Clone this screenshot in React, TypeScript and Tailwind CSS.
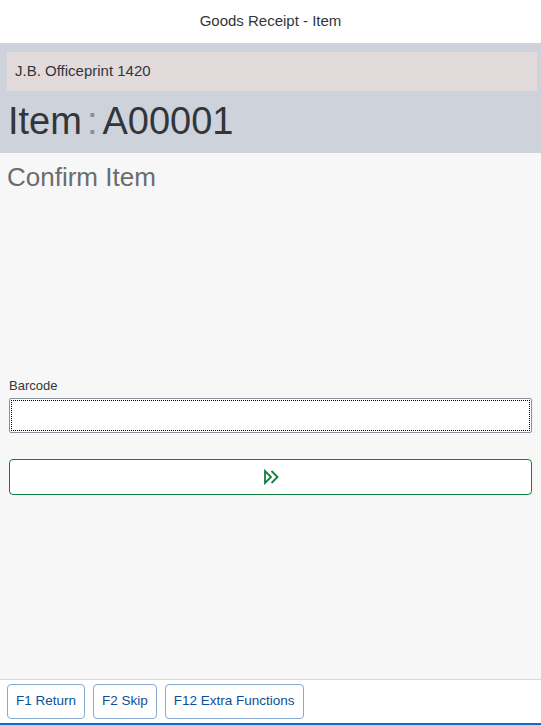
import React from "react";

const ForwardIcon = () => (
  <svg width="16" height="16" viewBox="0 0 16 16" fill="none" stroke="#107e3e" strokeWidth="1.8" strokeLinejoin="miter">
    <path d="M2 2 L2 14 L8 8 Z" />
    <path d="M8.5 2 L14.5 8 L8.5 14" />
  </svg>
);

export default function App() {
  return (
    <div
      className="flex h-[725px] w-full flex-col bg-[#f7f7f7] text-[#32363a]"
      style={{ fontFamily: '"Liberation Sans", Arial, sans-serif' }}
    >
      {/* title bar */}
      <div className="flex h-[43px] items-center justify-center bg-white text-[15px]">
        Goods Receipt - Item
      </div>

      {/* object header */}
      <div className="flex h-[110px] flex-col bg-[#ced3db] pl-[7px] pr-[4px] pt-[9px]">
        <div className="flex h-[39px] items-center bg-[#e2dadb] pl-[8px] text-[15px]">
          J.B. Officeprint 1420
        </div>
        <div className="mt-[7px] flex items-baseline pl-[1px] text-[38px] leading-[46px]">
          <span>Item</span>
          <span className="mx-[5px] text-[#8a8d90]">:</span>
          <span>A00001</span>
        </div>
      </div>

      {/* content */}
      <div className="flex flex-1 flex-col px-[9px]">
        <div className="mt-[8px] -ml-[2px] text-[26px] leading-[32px] text-[#6a6d70]">Confirm Item</div>

        <div className="mt-[185px] text-[13px] leading-[16px]">Barcode</div>
        <div className="mt-[4px] h-[35px] w-full rounded-[2px] border border-[#89919a] bg-white p-[1px]">
          <div className="h-full w-full border border-dotted border-black" />
        </div>

        <button className="mt-[26px] flex h-[36px] w-full items-center justify-center rounded-[4px] border border-[#107e3e] bg-white">
          <ForwardIcon />
        </button>
      </div>

      {/* footer */}
      <div className="flex gap-[8px] border-t border-b-2 border-t-[#d9d9d9] border-b-[#0a6ed1] bg-white px-[7px] py-[4px]">
        {["F1 Return", "F2 Skip", "F12 Extra Functions"].map((label) => (
          <button
            key={label}
            className="h-[35px] rounded-[4px] border border-[#8aa9d3] bg-white px-[8px] text-[13.5px] text-[#0b4f96]"
          >
            {label}
          </button>
        ))}
      </div>
    </div>
  );
}
